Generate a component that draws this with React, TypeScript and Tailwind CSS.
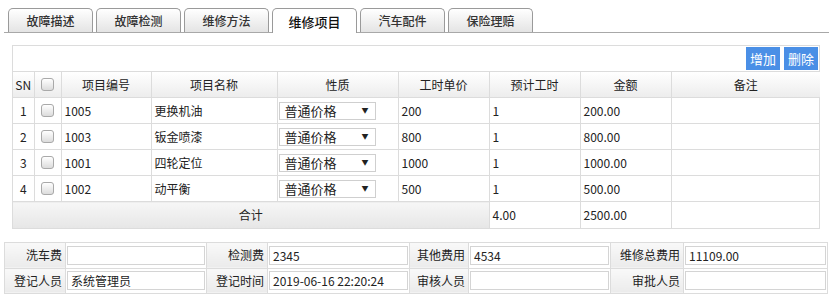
import React from "react";

const tabs = ["故障描述", "故障检测", "维修方法", "维修项目", "汽车配件", "保险理赔"];

const rows = [
  { sn: 1, code: "1005", name: "更换机油", price: "200", hours: "1", amount: "200.00" },
  { sn: 2, code: "1003", name: "钣金喷漆", price: "800", hours: "1", amount: "800.00" },
  { sn: 3, code: "1001", name: "四轮定位", price: "1000", hours: "1", amount: "1000.00" },
  { sn: 4, code: "1002", name: "动平衡", price: "500", hours: "1", amount: "500.00" },
];

const headers = [
  { label: "SN", w: "w-[21px]" },
  { label: "", w: "w-[27px]" },
  { label: "项目编号", w: "w-[90px]" },
  { label: "项目名称", w: "w-[126px]" },
  { label: "性质", w: "w-[121px]" },
  { label: "工时单价", w: "w-[91px]" },
  { label: "预计工时", w: "w-[91px]" },
  { label: "金额", w: "w-[91px]" },
  { label: "备注", w: "w-[149px]" },
];

function Checkbox() {
  return (
    <span className="mx-auto block h-[13px] w-[13px] rounded-[3px] border border-[#a9a9a9] bg-gradient-to-b from-white to-[#dcdcdc]" />
  );
}

function PriceSelect() {
  return (
    <span className="flex h-[18px] w-[97px] items-center justify-between border border-[#cfcfcf] bg-white pl-[5px] pr-[6px] text-[13px] leading-none">
      <span>普通价格</span>
      <span className="text-[7px]">▼</span>
    </span>
  );
}

function Label({ children, w }: { children: React.ReactNode; w: string }) {
  return (
    <td className={`${w} border border-[#dcdcdc] bg-gradient-to-b from-[#f9f9f9] to-[#ebebeb] pr-[3px] text-right`}>
      {children}
    </td>
  );
}

function Field({ value, w }: { value?: string; w: string }) {
  return (
    <td className={`${w} border border-[#dcdcdc] px-[1px]`}>
      <div className="h-[19px] w-full border border-[#d4d4d4] bg-white pl-[3px] leading-[17px]">{value}</div>
    </td>
  );
}

export default function App() {
  const cell = "border border-[#dcdcdc] px-[3px]";
  return (
    <div className="h-[298px] w-[833px] bg-white pt-[8px] font-['Noto_Sans_CJK_SC',sans-serif] text-[12px] text-[#222]">
      {/* tabs */}
      <div className="mx-[4px] flex h-[25px] items-end gap-[3px] border-b border-[#a8a8a8] pl-[4px]">
        {tabs.map((t) => {
          const active = t === "维修项目";
          return (
            <div
              key={t}
              className={
                active
                  ? "relative -mb-px flex h-[25px] w-[85px] items-center justify-center rounded-t-[5px] border border-b-0 border-[#9a9a9a] bg-white pt-[2px] text-[13px] font-medium text-[#111]"
                  : "flex h-[24px] w-[85px] items-center justify-center rounded-t-[5px] border border-b-0 border-[#9a9a9a] bg-gradient-to-b from-white to-[#e4e4e4] font-medium text-[#333]"
              }
            >
              {t}
            </div>
          );
        })}
      </div>

      {/* items */}
      <div className="mx-[12px] mt-[12px] w-[808px] border border-[#dcdcdc]">
        <div className="flex h-[25px] items-start justify-end gap-[4px] pt-[1px] pr-[1px]">
          <button className="h-[23px] w-[34px] bg-[#4a8fe6] text-[13px] text-white">增加</button>
          <button className="h-[23px] w-[34px] bg-[#4a8fe6] text-[13px] text-white">删除</button>
        </div>
        <table className="w-full table-fixed border-collapse">
          <thead>
            <tr className="h-[26px] bg-gradient-to-b from-white to-[#ececec]">
              {headers.map((h, i) => (
                <th key={i} className={`${h.w} border border-[#dcdcdc] p-0 text-center font-normal first:border-l-0 last:border-r-0`}>
                  {i === 1 ? <Checkbox /> : h.label}
                </th>
              ))}
            </tr>
          </thead>
          <tbody>
            {rows.map((r) => (
              <tr key={r.sn} className="h-[26px]">
                <td className={`${cell} border-l-0 text-center`}>{r.sn}</td>
                <td className={cell}>
                  <Checkbox />
                </td>
                <td className={cell}>{r.code}</td>
                <td className={cell}>{r.name}</td>
                <td className={`${cell} pl-[1px]`}>
                  <PriceSelect />
                </td>
                <td className={cell}>{r.price}</td>
                <td className={cell}>{r.hours}</td>
                <td className={cell}>{r.amount}</td>
                <td className={`${cell} border-r-0`} />
              </tr>
            ))}
            <tr className="h-[26px]">
              <td colSpan={6} className="border border-b-0 border-l-0 border-[#dcdcdc] bg-gradient-to-b from-[#f6f6f6] to-[#e6e6e6] text-center">
                合计
              </td>
              <td className={`${cell} border-b-0`}>4.00</td>
              <td className={`${cell} border-b-0`}>2500.00</td>
              <td className={`${cell} border-b-0 border-r-0`} />
            </tr>
          </tbody>
        </table>
      </div>

      {/* summary form */}
      <table className="mx-[4px] mt-[13px] w-[823px] table-fixed border-collapse">
        <tbody>
          <tr className="h-[26px]">
            <Label w="w-[61px]">洗车费</Label>
            <Field w="w-[141px]" />
            <Label w="w-[61px]">检测费</Label>
            <Field w="w-[142px]" value="2345" />
            <Label w="w-[59px]">其他费用</Label>
            <Field w="w-[142px]" value="4534" />
            <Label w="w-[73px]">维修总费用</Label>
            <Field w="w-[144px]" value="11109.00" />
          </tr>
          <tr className="h-[25px]">
            <Label w="w-[61px]">登记人员</Label>
            <Field w="w-[141px]" value="系统管理员" />
            <Label w="w-[61px]">登记时间</Label>
            <Field w="w-[142px]" value="2019-06-16 22:20:24" />
            <Label w="w-[59px]">审核人员</Label>
            <Field w="w-[142px]" />
            <Label w="w-[73px]">审批人员</Label>
            <Field w="w-[144px]" />
          </tr>
        </tbody>
      </table>
    </div>
  );
}
